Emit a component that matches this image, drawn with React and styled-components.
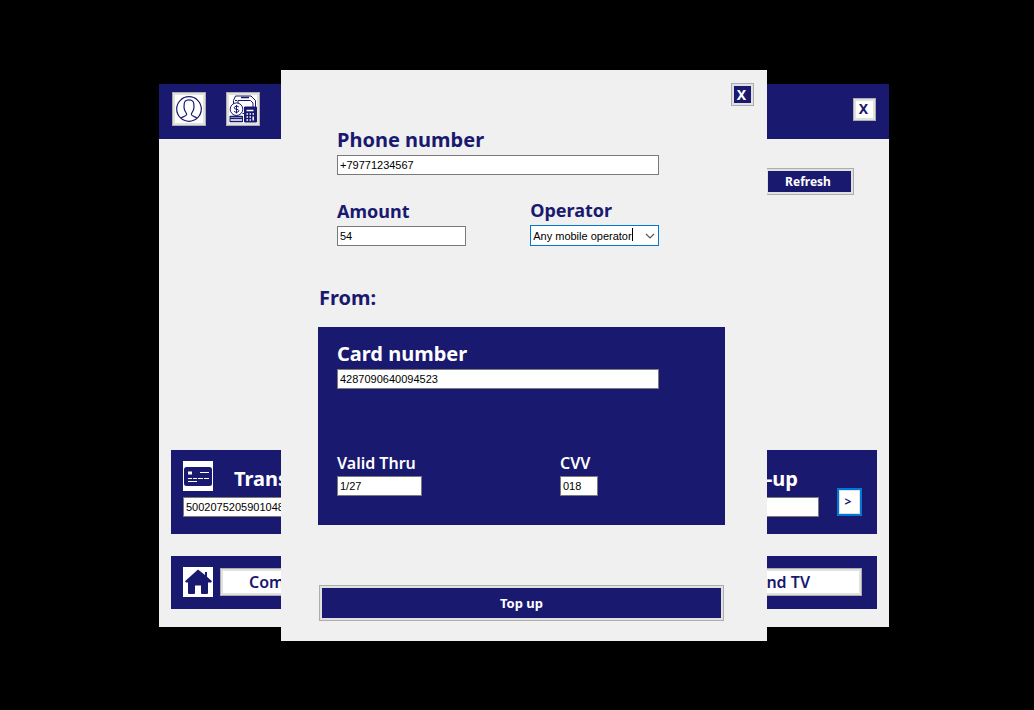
import React from "react";
import styled, { createGlobalStyle } from "styled-components";

const navy = "#191970";
const surface = "#f0f0f0";
const uiFont = '"Noto Sans", "Open Sans", sans-serif';
const fieldFont = '"Liberation Sans", Arial, sans-serif';

const labelSizes = {
  large: { size: 20, line: 24, weight: 700 },
  medium: { size: 18, line: 24, weight: 700 },
  small: { size: 16, line: 20, weight: 600 },
};

const GlobalStyle = createGlobalStyle`
  * { box-sizing: border-box; }
  body { margin: 0; background: #000; font-family: ${uiFont}; color: ${navy}; }
`;

const Screen = styled.div`
  display: grid;
  justify-items: center;
  align-items: center;
  min-height: 100vh;
  padding: 1px 0 0 14px;
`;

const BackWindow = styled.main`
  grid-area: 1 / 1;
  width: 100%;
  max-width: 730px;
  padding-bottom: 18px;
  background: ${surface};
`;

const TitleBar = styled.header`
  display: flex;
  align-items: center;
  gap: 20px;
  padding: 8px 13px 13px;
  background: ${navy};
`;

const FlatButton = styled.button`
  display: flex;
  align-items: center;
  justify-content: ${(p) => p.$justify || "center"};
  padding: ${(p) => p.$padding || "0"};
  border: 1px solid #adadad;
  box-shadow: inset 0 0 0 2px #e1e1e1;
  background: ${(p) => (p.$dark ? navy : "#fff")};
  color: ${(p) => (p.$dark ? "#fff" : navy)};
  font: 700 12px/16px ${uiFont};
`;

const IconButton = styled(FlatButton)`
  width: 34px;
  height: 34px;
`;

const CloseButton = styled(FlatButton)`
  width: 23px;
  height: 23px;
  margin-left: auto;
  padding-right: 2px;
  font-size: 14px;
`;

const RefreshButton = styled(FlatButton)`
  width: 89px;
  height: 27px;
  margin: 29px 35px 255px auto;
  padding-right: 3px;
`;

const WideButton = styled(FlatButton)`
  flex: 1;
  height: 28px;
  font-size: 16px;
  font-weight: 600;
`;

const GoButton = styled(FlatButton)`
  width: 25px;
  height: 28px;
  margin-bottom: 1px;
  padding-right: 3px;
  border: 2px solid #0078d7;
  box-shadow: inset 0 0 0 1px #e1e1e1;
`;

const SubmitButton = styled(FlatButton)`
  width: calc(100% - 2px);
  height: 36px;
  margin: 60px 1px 0;
  font-size: 13px;
`;

const Panel = styled.section`
  display: grid;
  grid-template-columns: 1fr 1fr;
  gap: 20px;
  margin: 0 12px;
  padding: 11px 15px ${(p) => p.$bottom}px 12px;
  background: ${navy};
  & + & { margin-top: 22px; }
`;

const Group = styled.div`
  display: flex;
  align-items: ${(p) => p.$align || "center"};
  gap: ${(p) => p.$gap}px;
`;

const Stack = styled.div`
  flex: 1;
  min-width: 0;
`;

const PanelHeading = styled.div`
  display: flex;
  align-items: flex-end;
  justify-content: ${(p) => (p.$end ? "flex-end" : "flex-start")};
  gap: 21px;
  height: 30px;
  margin-bottom: 6px;
  padding-right: 21px;
`;

const Label = styled.label`
  display: block;
  color: ${(p) => (p.$light ? "#fff" : navy)};
  font-size: ${(p) => labelSizes[p.$size || "large"].size}px;
  font-weight: ${(p) => labelSizes[p.$size || "large"].weight};
  line-height: ${(p) => labelSizes[p.$size || "large"].line}px;
`;

const TextInput = styled.input`
  display: block;
  width: ${(p) => p.$width || "100%"};
  height: 20px;
  padding: 0 2px;
  border: 1px solid #7a7a7a;
  border-radius: 0;
  background: #fff;
  color: #000;
  font: 11px ${fieldFont};
`;

const Dialog = styled.form`
  grid-area: 1 / 1;
  z-index: 1;
  width: 100%;
  max-width: 486px;
  padding: 13px 13px 20px;
  background: ${surface};
`;

const DialogBody = styled.div`
  padding: 22px 29px 0 24px;
`;

const Fields = styled.div`
  display: grid;
  gap: 23px;
  padding: 0 66px 0 19px;
`;

const FieldRow = styled.div`
  display: grid;
  grid-template-columns: ${(p) => p.$columns};
  justify-content: ${(p) => p.$justify || "space-between"};
  align-items: end;
`;

const Field = styled.div`
  display: grid;
  gap: 3px;
`;

const SelectBox = styled.div`
  position: relative;
  height: 21px;
  svg { position: absolute; top: 8px; right: 4px; pointer-events: none; }
`;

const Select = styled.select`
  display: block;
  appearance: none;
  width: 100%;
  height: 21px;
  padding: 0 2px;
  border: 1px solid #0078d7;
  border-radius: 0;
  background: #fff;
  color: #000;
  font: 11px ${fieldFont};
`;

const Caret = styled.span`
  position: absolute;
  top: 3px;
  left: 102px;
  width: 1px;
  height: 13px;
  background: #000;
`;

const SectionTitle = styled.h2`
  margin: 40px 0 17px 1px;
  font-size: 20px;
  line-height: 24px;
`;

const CardPanel = styled.section`
  display: grid;
  gap: 64px;
  padding: 15px 66px 29px 19px;
  background: ${navy};
`;

const UserIcon = () => (
  <svg width="28" height="28" viewBox="0 0 28 28" fill="none" stroke={navy} strokeWidth="1.2">
    <circle cx="14" cy="14" r="12.3" />
    <path d="M6 23.3c.8-1.6 5.5-2 5.6-3.8 0-1.2-.7-1.9-1.3-3-.5-.8-1.1-2.3-1.2-3.6-.1-.8-.2-1.6 0-2.3C9 6.500 10.600 4.800 14 4.800s5 1.700 4.900 5.800c.2.700.1 1.500 0 2.300-.1 1.300-.7 2.800-1.200 3.600-.6 1.100-1.300 1.800-1.300 3 .1 1.800 4.800 2.200 5.600 3.800" />
  </svg>
);

const FinanceIcon = () => (
  <svg width="28" height="28" viewBox="0 0 28 28" fill="none" stroke={navy}>
    <path d="M4.5 9V5.500l2-4.500h15.500l4.500 4.500v7M6 5.500h2M9 10V5.500h12.500L24 8v4" />
    <path d="M12 2.500h8" strokeWidth="1.500" />
    <circle cx="7.500" cy="14.200" r="6.300" fill="#fff" />
    <path d="M9.800 12c-.4-1.100-4.600-1.300-4.600.8s4.700.8 4.700 2.900-4.300 1.900-4.800.6M7.500 10v8.500" />
    <path d="M1 21.500h12.500M1 23.500h12.500M1 26.500h12.500" strokeWidth="1.400" />
    <path d="M1 21v6M13.500 21v6M13.500 18.500h2" />
    <path d="M15.500 12h12v15h-12z" fill={navy} />
    <path d="M17.500 15.500h7M17.500 19h1.500M20.500 19h1.500M23.500 19h1.500M17.500 22h1.500M20.500 22h1.500M17.500 25h1.500M20.500 25h1.500M24.200 21.500v4" stroke="#fff" strokeWidth="1.500" />
  </svg>
);

const CardIcon = () => (
  <svg width="30" height="30" viewBox="0 0 30 30">
    <path fill="#fff" d="M0 0h30v30H0z" />
    <rect x="1" y="6" width="28" height="19" rx="2.500" fill={navy} />
    <path d="M5 10.500h4v3H5z" fill="#fff" />
    <path d="M17 11.500h9M5 17.500h4M10 17.500h4M15 17.500h5M21 17.500h5M5 20.500h9" stroke="#fff" fill="none" />
  </svg>
);

const HomeIcon = () => (
  <svg width="30" height="30" viewBox="0 0 30 30">
    <path fill="#fff" d="M0 0h30v30H0z" />
    <path
      fill={navy}
      d="M15 2.500 2 14.300l1 1.200h2V26q0 1 1 1h5q1 0 1-1v-7.500h6V26q0 1 1 1h5q1 0 1-1V15.500h3l1-1.200-5-4.600V5h-2v2.900z"
    />
  </svg>
);

const Chevron = () => (
  <svg width="10" height="6" viewBox="0 0 10 6" fill="none" stroke="#555" strokeWidth="1.200">
    <path d="m1 1 4 4 4-4" />
  </svg>
);

export default function App() {
  return (
    <>
      <GlobalStyle />
      <Screen>
        <BackWindow>
          <TitleBar>
            <IconButton type="button" aria-label="Profile"><UserIcon /></IconButton>
            <IconButton type="button" aria-label="Finances"><FinanceIcon /></IconButton>
            <CloseButton type="button">X</CloseButton>
          </TitleBar>
          <RefreshButton type="button" $dark>Refresh</RefreshButton>
          <Panel $bottom={17}>
            <Stack>
              <PanelHeading>
                <CardIcon />
                <Label $light htmlFor="transfer">Transfer</Label>
              </PanelHeading>
              <TextInput id="transfer" defaultValue="5002075205901048" />
            </Stack>
            <Group $gap={18} $align="flex-end">
              <Stack>
                <PanelHeading $end>
                  <Label $light htmlFor="topup">Top-up</Label>
                </PanelHeading>
                <TextInput id="topup" />
              </Stack>
              <GoButton type="button">&gt;</GoButton>
            </Group>
          </Panel>
          <Panel $bottom={12}>
            <Group $gap={7}>
              <HomeIcon />
              <WideButton type="button" $justify="flex-start" $padding="0 28px">Communal</WideButton>
            </Group>
            <Group $gap={7}>
              <WideButton type="button" $justify="flex-end" $padding="0 51px">Internet and TV</WideButton>
            </Group>
          </Panel>
        </BackWindow>

        <Dialog>
          <CloseButton type="button" $dark>X</CloseButton>
          <DialogBody>
            <Fields>
              <Field>
                <Label htmlFor="phone">Phone number</Label>
                <TextInput id="phone" defaultValue="+79771234567" />
              </Field>
              <FieldRow $columns="40% 40%">
                <Field>
                  <Label $size="medium" htmlFor="amount">Amount</Label>
                  <TextInput id="amount" defaultValue="54" />
                </Field>
                <Field>
                  <Label $size="medium" htmlFor="operator">Operator</Label>
                  <SelectBox>
                    <Select id="operator">
                      <option>Any mobile operator</option>
                    </Select>
                    <Caret />
                    <Chevron />
                  </SelectBox>
                </Field>
              </FieldRow>
            </Fields>
            <SectionTitle>From:</SectionTitle>
            <CardPanel>
              <Field>
                <Label $light htmlFor="card">Card number</Label>
                <TextInput id="card" defaultValue="4287090640094523" />
              </Field>
              <FieldRow $columns="223px 38px" $justify="start">
                <Field>
                  <Label $light $size="small" htmlFor="valid">Valid Thru</Label>
                  <TextInput id="valid" $width="85px" defaultValue="1/27" />
                </Field>
                <Field>
                  <Label $light $size="small" htmlFor="cvv">CVV</Label>
                  <TextInput id="cvv" defaultValue="018" />
                </Field>
              </FieldRow>
            </CardPanel>
            <SubmitButton type="submit" $dark>Top up</SubmitButton>
          </DialogBody>
        </Dialog>
      </Screen>
    </>
  );
}
